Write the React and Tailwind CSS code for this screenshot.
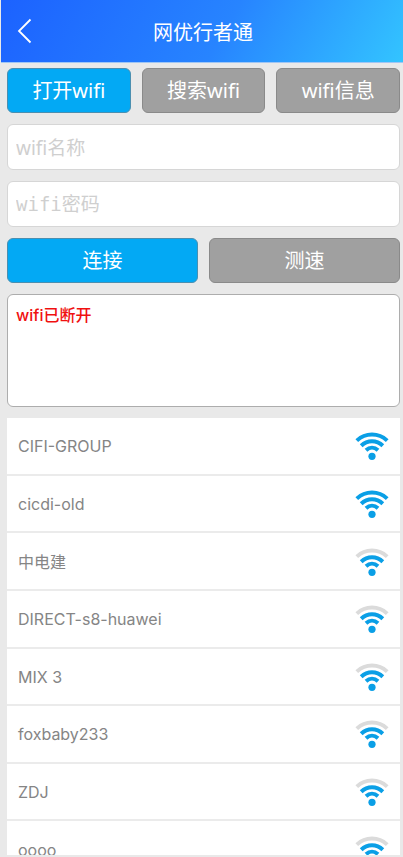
import React from "react";

const networks = [
  { name: "CIFI-GROUP", full: true },
  { name: "cicdi-old", full: true },
  { name: "中电建", full: false },
  { name: "DIRECT-s8-huawei", full: false },
  { name: "MIX 3", full: false },
  { name: "foxbaby233", full: false },
  { name: "ZDJ", full: false },
  { name: "oooo", full: false },
];

function WifiIcon({ full }) {
  return (
    <svg width="34" height="28" viewBox="0 0 34 28" fill="none" stroke="#0a9fe6" strokeWidth="4" aria-hidden="true">
      <path d="M1.8 8.6C10.5 0.6 23.5 0.6 32.2 8.6" stroke={full ? "#0a9fe6" : "#dbdbdb"} />
      <path d="M6.2 13.7C12.4 7.7 21.6 7.7 27.8 13.7" />
      <path d="M11 18.2C14.6 15 19.4 15 23 18.2" />
      <circle cx="17" cy="24.3" r="3.6" fill="#0a9fe6" stroke="none" />
    </svg>
  );
}

function ActionButton({ children, active }) {
  return (
    <button
      type="button"
      className={`h-[45px] flex-1 rounded-md border text-xl text-white ${
        active ? "border-[#4b8fb0] bg-[#03a9f4]" : "border-[#8a8a8a] bg-[#a0a0a0]"
      }`}
    >
      {children}
    </button>
  );
}

export default function App() {
  return (
    <div className="flex h-dvh flex-col overflow-hidden bg-[#e9e9e9] pb-0.5 pl-px font-['Noto_Sans','Noto_Sans_CJK_SC',sans-serif]">
      <header className="grid h-[63px] shrink-0 grid-cols-[1fr_auto_1fr] items-center border-b border-[#9fc6f5] bg-[linear-gradient(120deg,#1c62ff_0%,#2784ff_55%,#33c4ff_100%)] pt-1 pl-0.5 text-white">
        <button type="button" aria-label="返回" className="mb-1 ml-3.5 w-4">
          <svg width="15" height="26" viewBox="0 0 15 26" fill="none" stroke="currentColor" strokeWidth="1.8" aria-hidden="true">
            <path d="M13.5 1.5L2 13L13.5 24.5" />
          </svg>
        </button>
        <h1 className="text-xl">网优行者通</h1>
      </header>
      <main className="flex min-h-0 flex-1 flex-col gap-[11px] pt-[5px] pr-[3px] pl-[6px]">
        <div className="flex shrink-0 gap-[11px]">
          <ActionButton active>打开wifi</ActionButton>
          <ActionButton>搜索wifi</ActionButton>
          <ActionButton>wifi信息</ActionButton>
        </div>
        <input
          type="text"
          aria-label="wifi名称"
          placeholder="wifi名称"
          className="h-[46px] shrink-0 rounded-md border border-[#d6d6d6] bg-white px-2 pt-0.5 text-[19px] placeholder:text-[#cfcfcf]"
        />
        <input
          type="password"
          aria-label="wifi密码"
          placeholder="wifi密码"
          className="h-[46px] shrink-0 rounded-md border border-[#d6d6d6] bg-white px-2 font-['DejaVu_Sans_Mono','Noto_Sans_CJK_SC',monospace] text-[19px] placeholder:text-[#cfcfcf]"
        />
        <div className="flex shrink-0 gap-[11px]">
          <ActionButton active>连接</ActionButton>
          <ActionButton>测速</ActionButton>
        </div>
        <div role="status" className="h-[113px] shrink-0 rounded-md border border-[#adadad] bg-white px-2 py-2 font-['Inter','Noto_Sans_CJK_SC',sans-serif] text-base font-medium text-[#f01010]">
          wifi已断开
        </div>
        <div className="min-h-0 flex-1 overflow-hidden bg-white">
          <ul className="grid h-[461px] grid-rows-8 font-['Inter','Noto_Sans_CJK_SC',sans-serif] text-base text-[#858585]">
            {networks.map((n) => (
              <li key={n.name} className="flex items-center justify-between border-b-2 border-[#ebebeb] px-[11px] pt-px">
                <span>{n.name}</span>
                <WifiIcon full={n.full} />
              </li>
            ))}
          </ul>
        </div>
      </main>
    </div>
  );
}
